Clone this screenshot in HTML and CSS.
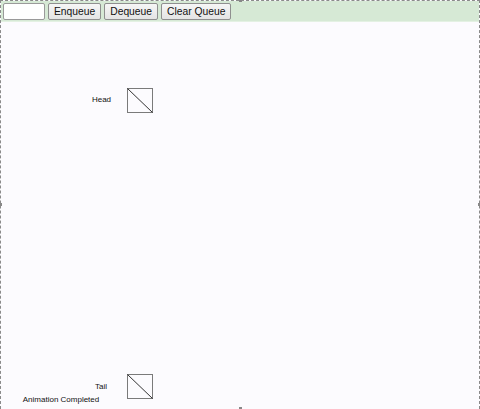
FILE: index.html
```html
<!DOCTYPE html>
<html>
<head>
<meta charset="utf-8">
<link rel="stylesheet" href="styles.css">
</head>
<body>
<div class="frame">
  <div class="toolbar">
    <input class="field" type="text">
    <button class="btn">Enqueue</button>
    <button class="btn">Dequeue</button>
    <button class="btn">Clear Queue</button>
  </div>
  <div class="canvas">
    <svg class="stage" width="478" height="387" viewBox="0 0 478 387">
      <text class="lbl" x="100.5" y="80">Head</text>
      <rect class="cell" x="126.5" y="66.5" width="25" height="24"/>
      <line class="null" x1="126.5" y1="66.5" x2="151.5" y2="90.5"/>
      <text class="lbl" x="100" y="366.5">Tail</text>
      <rect class="cell" x="126.5" y="352.5" width="25" height="24"/>
      <line class="null" x1="126.5" y1="352.5" x2="151.5" y2="376.5"/>
      <text class="lbl" x="60" y="379.5">Animation Completed</text>
    </svg>
  </div>
  <span class="handle h-top"></span>
  <span class="handle h-bottom"></span>
  <span class="handle h-left"></span>
  <span class="handle h-right"></span>
</div>
</body>
</html>
```

FILE: styles.css
```css
html, body {
  margin: 0;
  padding: 0;
  background: #fcfbfe;
}
.frame {
  position: relative;
  width: 480px;
  height: 409px;
  box-sizing: border-box;
  border: 1px dashed #8a8a8a;
  display: flex;
  flex-direction: column;
  font-family: "Liberation Sans", Arial, sans-serif;
}
.toolbar {
  background: #d6e9d5;
  border-bottom: 1px solid #e4f1e3;
  display: flex;
  align-items: flex-start;
  gap: 3px;
  padding: 2px 0 0 1px;
  box-sizing: border-box;
  flex: 0 0 auto;
  height: 21px;
}
.field {
  width: 42px;
  height: 17px;
  box-sizing: border-box;
  margin: 0 0 0 1px;
  padding: 0;
  border: 1px solid #9a9a9a;
  border-radius: 2px;
  background: #fff;
}
.btn {
  height: 17px;
  box-sizing: border-box;
  margin: 0;
  padding: 0 5px;
  border: 1px solid #8f8f8f;
  border-radius: 2px;
  background: linear-gradient(#f6f6f6, #e4e4e4);
  font-family: "Liberation Sans", Arial, sans-serif;
  font-size: 10.3px;
  line-height: 14px;
  color: #111;
}
.canvas {
  flex: 1 1 auto;
  background: #fcfbfe;
}
.stage {
  display: block;
}
.lbl {
  font-family: "Liberation Sans", Arial, sans-serif;
  font-size: 8px;
  fill: #111;
  text-anchor: middle;
}
.cell {
  fill: none;
  stroke: #7a7a7a;
  stroke-width: 1;
}
.null {
  stroke: #333;
  stroke-width: 1;
}
.handle {
  position: absolute;
  width: 3px;
  height: 3px;
  background: #888;
}
.h-top { left: 238px; top: -2px; }
.h-bottom { left: 238px; bottom: -2px; }
.h-left { left: -2px; top: 202px; }
.h-right { right: -2px; top: 202px; }
```
